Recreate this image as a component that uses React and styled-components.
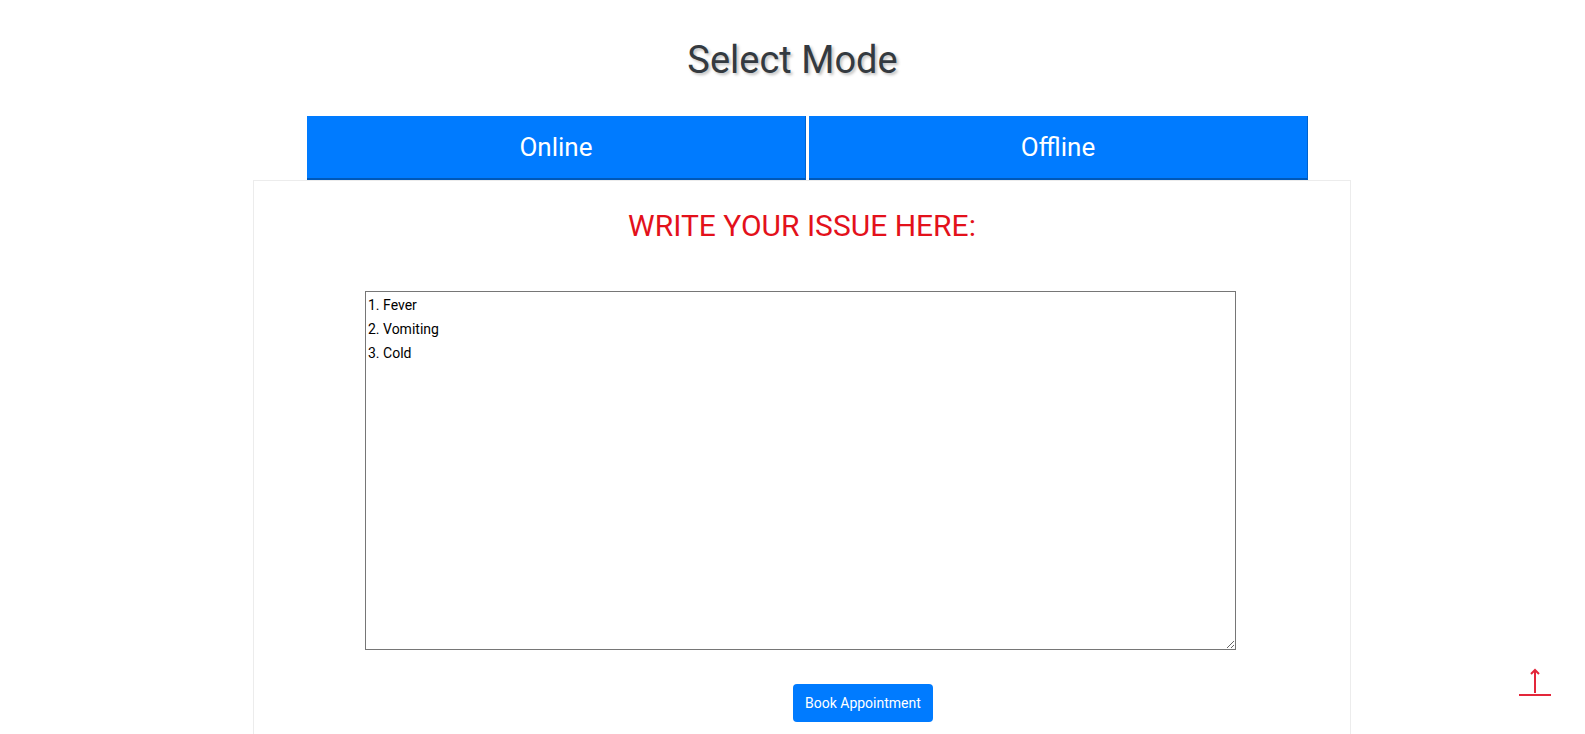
import React from 'react';
import styled, { createGlobalStyle } from 'styled-components';

const GlobalStyle = createGlobalStyle`
  body {
    margin: 0;
    background: #ffffff;
    font-family: Roboto, "Open Sans", sans-serif;
  }
`;

const Page = styled.div`
  display: flex;
  flex-direction: column;
  height: 734px;
  overflow: hidden;
`;

const Title = styled.h1`
  margin: 30px 0 0 0;
  text-align: center;
  font-size: 38px;
  font-weight: 400;
  line-height: 60px;
  color: #343a40;
  text-shadow: 2px 2px 3px rgba(0, 0, 0, 0.25);
`;

const ModeRow = styled.div`
  display: flex;
  gap: 3px;
  margin: 26px 0 0 307px;
`;

const ModeButton = styled.button`
  width: 499px;
  height: 64px;
  border: none;
  border-right: 1px solid #0062cc;
  border-bottom: 2px solid #0058b8;
  background: #007bff;
  color: #ffffff;
  font-family: inherit;
  font-size: 26px;
  cursor: pointer;
`;

const Card = styled.div`
  display: flex;
  flex-direction: column;
  width: 1098px;
  flex: 1;
  margin-left: 253px;
  border: 1px solid #ececec;
  border-bottom: none;
  box-sizing: border-box;
`;

const IssueHeading = styled.h2`
  margin: 25px 0 0 0;
  text-align: center;
  font-size: 30px;
  font-weight: 400;
  line-height: 40px;
  color: #e3111b;
`;

const IssueBox = styled.textarea`
  display: block;
  width: 871px;
  height: 359px;
  margin: 45px 0 0 111px;
  padding: 1px 2px;
  box-sizing: border-box;
  border: 1px solid #767676;
  font-family: inherit;
  font-size: 14px;
  line-height: 24px;
  color: #000000;
  resize: both;
  outline: none;
`;

const BookButton = styled.button`
  align-self: flex-start;
  margin: 34px 0 0 539px;
  padding: 0 12px;
  height: 38px;
  border: none;
  border-radius: 4px;
  background: #007bff;
  color: #ffffff;
  font-family: inherit;
  font-size: 14px;
  cursor: pointer;
`;

const ScrollTop = styled.button`
  position: fixed;
  right: 33px;
  bottom: 35px;
  width: 34px;
  height: 34px;
  padding: 0;
  border: none;
  background: transparent;
  cursor: pointer;
`;

const App = () => {
  return (
    <>
      <GlobalStyle />
      <Page>
        <Title>Select Mode</Title>
        <ModeRow>
          <ModeButton>Online</ModeButton>
          <ModeButton>Offline</ModeButton>
        </ModeRow>
        <Card>
          <IssueHeading>WRITE YOUR ISSUE HERE:</IssueHeading>
          <IssueBox defaultValue={'1. Fever\n2. Vomiting\n3. Cold'} />
          <BookButton>Book Appointment</BookButton>
        </Card>
      </Page>
      <ScrollTop aria-label="Back to top">
        <svg width="34" height="34" viewBox="0 0 34 34" fill="none" stroke="#e3263a" strokeWidth="2">
          <path d="M17 5 V28" />
          <path d="M13 9 L17 5 L21 9" />
          <path d="M1 30 H33" />
        </svg>
      </ScrollTop>
    </>
  );
};

export default App;
